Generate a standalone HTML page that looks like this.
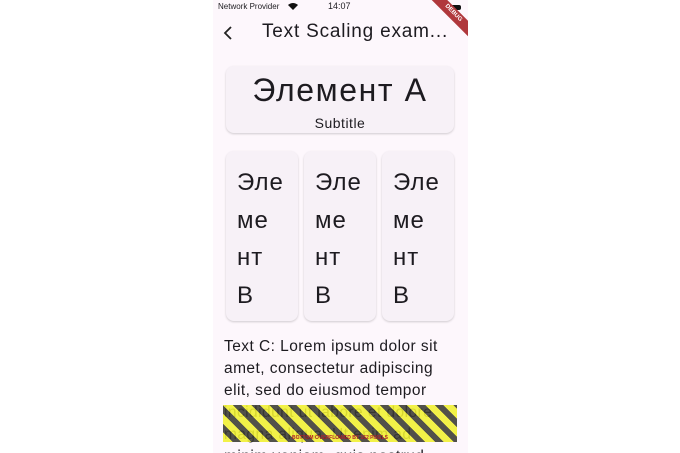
<!DOCTYPE html>
<html><head><style>
body{margin:0;width:680px;height:453px;background:#fff;position:relative;overflow:hidden;font-family:"Liberation Sans","DejaVu Sans",sans-serif;color:#1d1b20}
#s{position:absolute;left:213px;top:0;width:255px;height:453px;background:#fdf7fc;overflow:hidden}
.a{position:absolute}
.card{position:absolute;background:#f7f1f7;border-radius:8px;box-shadow:0 1px 2px rgba(0,0,0,.18)}
.b{font-size:24px;line-height:37.5px;padding:13px 0 0 11px;letter-spacing:1px}
</style></head><body>
<div id="s">
<div class="a" style="left:5px;top:2px;font-size:8px">Network Provider</div>
<svg class="a" style="left:75px;top:2px" width="10" height="8" viewBox="0 0 10 8"><path d="M0 3Q5-1 10 3L5 8Z" fill="#111"/></svg>
<div class="a" style="left:115px;top:1px;font-size:9px">14:07</div>
<div class="a" style="left:236px;top:5px;width:12px;height:5px;background:#111;border-radius:2px"></div>
<div class="a" style="left:200px;top:8px;width:80px;height:11px;background:#b0383c;transform:rotate(45deg);color:#fff;font-size:6px;text-align:center;line-height:11px;font-weight:bold">DEBUG</div>
<svg class="a" style="left:9px;top:25px" width="12" height="16"><path d="M9 2L3 8L9 14" stroke="#222" stroke-width="1.8" fill="none"/></svg>
<div class="a" style="left:49px;top:21px;font-size:19px;white-space:nowrap;letter-spacing:0.8px">Text Scaling exam...</div>
<div class="card" style="left:13px;top:66px;width:228px;height:67px">
<div style="text-align:center;font-size:32px;line-height:32px;margin-top:8px;letter-spacing:1.6px">Элемент A</div>
<div style="text-align:center;font-size:14px;margin-top:9px;letter-spacing:0.5px">Subtitle</div></div>
<div class="card b" style="left:13px;top:151px;width:61px;height:157px">Эле<br>ме<br>нт<br>В</div>
<div class="card b" style="left:91px;top:151px;width:61px;height:157px">Эле<br>ме<br>нт<br>В</div>
<div class="card b" style="left:169px;top:151px;width:61px;height:157px">Эле<br>ме<br>нт<br>В</div>
<div class="a" style="left:11px;top:336px;width:232px;font-size:15.5px;line-height:22px;letter-spacing:0.45px">Text C: Lorem ipsum dolor sit amet, consectetur adipiscing elit, sed do eiusmod tempor incididunt ut labore et dolore magna aliqua. Ut enim ad minim veniam, quis nostrud</div>
<div class="a" style="left:10px;top:405px;width:234px;height:37px;background:repeating-linear-gradient(45deg,#f0f030 0 7px,#3a3a32 7px 13px);opacity:.88"></div>
<div class="a" style="left:10px;top:435px;width:234px;text-align:center;font-size:5px;font-weight:bold;color:#b0202a">BOTTOM OVERFLOWED BY 162 PIXELS</div>
</div>
</body></html>
